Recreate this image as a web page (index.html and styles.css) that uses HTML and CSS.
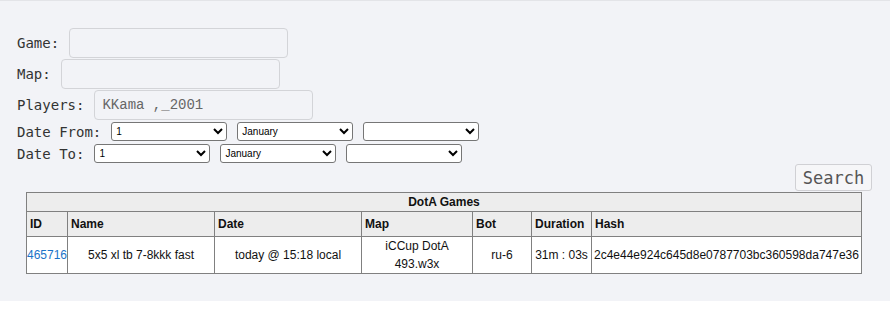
FILE: index.html
```html
<!DOCTYPE html>
<html lang="en">
<head>
  <meta charset="UTF-8">
  <title>DotA Games</title>
  <link rel="stylesheet" href="styles.css">
</head>
<body>

<div class="panel">
  <form class="search-form">
    <div class="field">
      <label>Game:</label>
      <input type="text" class="text-input">
    </div>
    <div class="field">
      <label>Map:</label>
      <input type="text" class="text-input">
    </div>
    <div class="field players">
      <label>Players:</label>
      <input type="text" class="text-input" value="KKama ,_2001">
    </div>
    <div class="field date-row">
      <label>Date From:</label>
      <select><option>1</option></select>
      <select><option>January</option></select>
      <select><option></option></select>
    </div>
    <div class="field date-row last">
      <label>Date To:</label>
      <select><option>1</option></select>
      <select><option>January</option></select>
      <select><option></option></select>
    </div>
    <div class="actions">
      <button type="button">Search</button>
    </div>
  </form>

  <table class="games">
    <colgroup>
      <col style="width: 41px">
      <col style="width: 147px">
      <col style="width: 147px">
      <col style="width: 111px">
      <col style="width: 59px">
      <col style="width: 60px">
      <col>
    </colgroup>
    <thead>
      <tr><th colspan="7" class="caption">DotA Games</th></tr>
      <tr>
        <th>ID</th><th>Name</th><th>Date</th><th>Map</th><th>Bot</th><th>Duration</th><th>Hash</th>
      </tr>
    </thead>
    <tbody>
      <tr>
        <td class="id"><a href="#">465716</a></td>
        <td>5x5 xl tb 7-8kkk fast</td>
        <td>today @ 15:18 local</td>
        <td>iCCup DotA 493.w3x</td>
        <td>ru-6</td>
        <td>31m : 03s</td>
        <td class="hash">2c4e44e924c645d8e0787703bc360598da747e36</td>
      </tr>
    </tbody>
  </table>
</div>

</body>
</html>
```

FILE: styles.css
```css
body {
  margin: 0;
  background: #fff;
}
.panel {
  background: #f2f3f7;
  border-top: 1px solid #e3e4e8;
  padding: 27px 18px 27px 17px;
}
.search-form {
  display: flex;
  flex-direction: column;
}
.field {
  display: flex;
  align-items: center;
  gap: 10px;
  margin-bottom: 1px;
}
.field label {
  font-family: "DejaVu Sans Mono", monospace;
  font-size: 14px;
  color: #333;
}
.text-input {
  width: 219px;
  height: 30px;
  box-sizing: border-box;
  border: 1px solid #d3d4d8;
  border-radius: 4px;
  background: #f2f3f7;
  padding: 0 7px;
  font-family: "Liberation Mono", monospace;
  font-size: 14px;
  line-height: 20px;
  color: #666;
}
.players { margin-bottom: 2px; }
.date-row { height: 19px; margin-bottom: 3px; }
.date-row.last { margin-bottom: 1px; }
.date-row select {
  width: 116px;
  height: 19px;
  box-sizing: border-box;
  background: #fff;
  border: 1px solid #767676;
  border-radius: 3px;
  font-family: "Liberation Sans", Arial, sans-serif;
  font-size: 10px;
  color: #000;
}
.actions {
  display: flex;
  justify-content: flex-end;
}
.actions button {
  font-family: "DejaVu Sans Mono", monospace;
  font-size: 17px;
  color: #555;
  background: #f6f6f8;
  border: 1px solid #d0d0d4;
  border-radius: 3px;
  width: 77px;
  height: 27px;
  padding: 0;
  margin-bottom: 1px;
}
.games {
  margin-left: 9px;
  width: 836px;
  table-layout: fixed;
  border-collapse: collapse;
  font-family: "Liberation Sans", Arial, sans-serif;
  font-size: 12px;
  color: #111;
}
.games th, .games td {
  border: 1px solid #808080;
  line-height: 18px;
}
.games th {
  background: #ededed;
  text-align: left;
  padding: 3px 3px;
}
.games th.caption {
  text-align: center;
  padding: 0;
}
.games td {
  background: #fff;
  text-align: center;
  padding: 0 2px;
}
.games td.id {
  text-align: left;
  padding: 0;
  overflow: visible;
}
.games td.id a {
  color: #1a73c8;
  text-decoration: none;
}
.games td.hash {
  text-align: left;
}
```
